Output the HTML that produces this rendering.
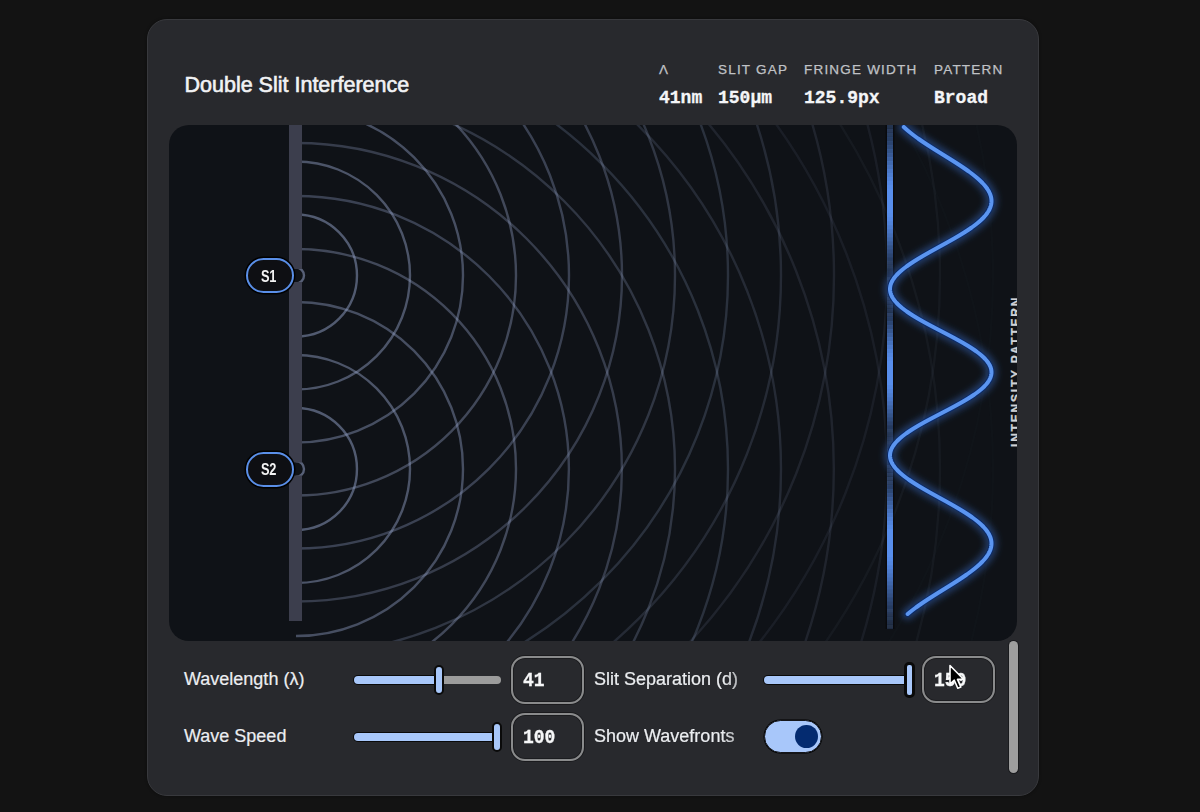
<!DOCTYPE html>
<html><head><meta charset="utf-8">
<style>
html,body{margin:0;padding:0;background:#131313;width:1200px;height:812px;overflow:hidden;font-family:"Liberation Sans",sans-serif;}
.abs{position:absolute;}
#card{position:absolute;left:147px;top:19px;width:890px;height:775px;background:#28292d;border:1px solid #38393d;border-radius:20px;box-shadow:0 0 3px rgba(0,0,0,0.4);}
.title{position:absolute;left:184.5px;top:71.8px;font-size:21.5px;color:#f1f2f4;white-space:nowrap;line-height:26px;-webkit-text-stroke:0.6px #f1f2f4;}
.lab{position:absolute;top:61.5px;font-size:13.5px;letter-spacing:1.2px;color:#c0c2c6;white-space:nowrap;line-height:16px;-webkit-text-stroke:0.25px #c0c2c6;}
.val{position:absolute;top:87px;font-family:"Liberation Mono",monospace;font-weight:bold;font-size:18px;color:#f4f5f7;white-space:nowrap;line-height:22px;-webkit-text-stroke:0.3px #f4f5f7;}
#canvas{position:absolute;left:169px;top:125px;width:848px;height:516px;background:#0f1217;border-radius:20px;overflow:hidden;}
#canvas svg{position:absolute;left:0;top:0;}
.pill{position:absolute;width:44px;height:31px;border:2px solid #5a8fe8;border-radius:18px;background:#0e0f13;box-shadow:0 0 0 1.5px #000;color:#f2f2f2;font-weight:bold;font-size:16px;letter-spacing:-0.3px;line-height:31px;text-align:center;}
.vtxt{position:absolute;left:840.5px;top:173px;width:12px;height:149px;}
.vtxt span{position:absolute;left:0;top:149px;transform-origin:0 0;transform:rotate(-90deg);font-size:12px;font-weight:bold;letter-spacing:1.8px;color:#d0d2d5;white-space:nowrap;line-height:12px;-webkit-text-stroke:0.3px #d0d2d5;}
.clab{position:absolute;font-size:18px;color:#eceef1;white-space:nowrap;line-height:22px;-webkit-text-stroke:0.2px #eceef1;}
.track{position:absolute;height:8px;border-radius:4px;}
.thumb{position:absolute;width:6px;height:26px;background:#a8c7fa;border:2px solid #0a0a0a;border-radius:5px;}
.box{position:absolute;width:69px;height:43.5px;border:2px solid #8a8b8c;border-radius:14px;box-shadow:0 0 0 1px rgba(0,0,0,0.35), inset 0 0 0 1px rgba(0,0,0,0.3);}
.bval{position:absolute;font-family:"Liberation Mono",monospace;font-weight:bold;font-size:20px;color:#f6f7f8;line-height:22px;transform-origin:0 0;transform:scaleX(0.9);-webkit-text-stroke:0.3px #f6f7f8;}
</style></head><body>
<div id="card"></div>
<div class="title">Double Slit Interference</div>
<div class="lab" style="left:659px">&#923;</div>
<div class="lab" style="left:718px">SLIT GAP</div>
<div class="lab" style="left:804px">FRINGE WIDTH</div>
<div class="lab" style="left:934px">PATTERN</div>
<div class="val" style="left:659px">41nm</div>
<div class="val" style="left:718px">150&#956;m</div>
<div class="val" style="left:804px">125.9px</div>
<div class="val" style="left:934px">Broad</div>

<div id="canvas">
<svg width="848" height="516" viewBox="0 0 848 516">
<defs><filter id="blur" x="-20%" y="-20%" width="140%" height="140%"><feGaussianBlur stdDeviation="3"/></filter></defs>
<path d="M127.0 142.5 A8.0 8.0 0 0 1 127.0 158.5" stroke="rgba(146,160,198,0.553)" stroke-width="2.4" fill="none"/>
<path d="M127.0 89.5 A61.0 61.0 0 0 1 127.0 211.5" stroke="rgba(146,160,198,0.510)" stroke-width="2.4" fill="none"/>
<path d="M127.0 36.5 A114.0 114.0 0 0 1 127.0 264.5" stroke="rgba(146,160,198,0.467)" stroke-width="2.4" fill="none"/>
<path d="M127.0 -16.5 A167.0 167.0 0 0 1 127.0 317.5" stroke="rgba(146,160,198,0.424)" stroke-width="2.4" fill="none"/>
<path d="M127.0 -69.5 A220.0 220.0 0 0 1 127.0 370.5" stroke="rgba(146,160,198,0.382)" stroke-width="2.4" fill="none"/>
<path d="M127.0 -122.5 A273.0 273.0 0 0 1 127.0 423.5" stroke="rgba(146,160,198,0.339)" stroke-width="2.4" fill="none"/>
<path d="M127.0 -175.5 A326.0 326.0 0 0 1 127.0 476.5" stroke="rgba(146,160,198,0.297)" stroke-width="2.4" fill="none"/>
<path d="M127.0 -228.5 A379.0 379.0 0 0 1 127.0 529.5" stroke="rgba(146,160,198,0.255)" stroke-width="2.4" fill="none"/>
<path d="M127.0 -281.5 A432.0 432.0 0 0 1 127.0 582.5" stroke="rgba(146,160,198,0.214)" stroke-width="2.4" fill="none"/>
<path d="M127.0 -334.5 A485.0 485.0 0 0 1 127.0 635.5" stroke="rgba(146,160,198,0.173)" stroke-width="2.4" fill="none"/>
<path d="M127.0 -387.5 A538.0 538.0 0 0 1 127.0 688.5" stroke="rgba(146,160,198,0.132)" stroke-width="2.4" fill="none"/>
<path d="M127.0 -440.5 A591.0 591.0 0 0 1 127.0 741.5" stroke="rgba(146,160,198,0.092)" stroke-width="2.4" fill="none"/>
<path d="M127.0 -493.5 A644.0 644.0 0 0 1 127.0 794.5" stroke="rgba(146,160,198,0.053)" stroke-width="2.4" fill="none"/>
<path d="M127.0 -546.5 A697.0 697.0 0 0 1 127.0 847.5" stroke="rgba(146,160,198,0.015)" stroke-width="2.4" fill="none"/>
<path d="M127.0 336.0 A8.0 8.0 0 0 1 127.0 352.0" stroke="rgba(146,160,198,0.553)" stroke-width="2.4" fill="none"/>
<path d="M127.0 283.0 A61.0 61.0 0 0 1 127.0 405.0" stroke="rgba(146,160,198,0.510)" stroke-width="2.4" fill="none"/>
<path d="M127.0 230.0 A114.0 114.0 0 0 1 127.0 458.0" stroke="rgba(146,160,198,0.467)" stroke-width="2.4" fill="none"/>
<path d="M127.0 177.0 A167.0 167.0 0 0 1 127.0 511.0" stroke="rgba(146,160,198,0.424)" stroke-width="2.4" fill="none"/>
<path d="M127.0 124.0 A220.0 220.0 0 0 1 127.0 564.0" stroke="rgba(146,160,198,0.382)" stroke-width="2.4" fill="none"/>
<path d="M127.0 71.0 A273.0 273.0 0 0 1 127.0 617.0" stroke="rgba(146,160,198,0.339)" stroke-width="2.4" fill="none"/>
<path d="M127.0 18.0 A326.0 326.0 0 0 1 127.0 670.0" stroke="rgba(146,160,198,0.297)" stroke-width="2.4" fill="none"/>
<path d="M127.0 -35.0 A379.0 379.0 0 0 1 127.0 723.0" stroke="rgba(146,160,198,0.255)" stroke-width="2.4" fill="none"/>
<path d="M127.0 -88.0 A432.0 432.0 0 0 1 127.0 776.0" stroke="rgba(146,160,198,0.214)" stroke-width="2.4" fill="none"/>
<path d="M127.0 -141.0 A485.0 485.0 0 0 1 127.0 829.0" stroke="rgba(146,160,198,0.173)" stroke-width="2.4" fill="none"/>
<path d="M127.0 -194.0 A538.0 538.0 0 0 1 127.0 882.0" stroke="rgba(146,160,198,0.132)" stroke-width="2.4" fill="none"/>
<path d="M127.0 -247.0 A591.0 591.0 0 0 1 127.0 935.0" stroke="rgba(146,160,198,0.092)" stroke-width="2.4" fill="none"/>
<path d="M127.0 -300.0 A644.0 644.0 0 0 1 127.0 988.0" stroke="rgba(146,160,198,0.053)" stroke-width="2.4" fill="none"/>
<path d="M127.0 -353.0 A697.0 697.0 0 0 1 127.0 1041.0" stroke="rgba(146,160,198,0.015)" stroke-width="2.4" fill="none"/>
<rect x="120" y="0.0" width="13" height="144.0" fill="#3c3e4d"/>
<rect x="120" y="157.0" width="13" height="180.5" fill="#3c3e4d"/>
<rect x="120" y="350.5" width="13" height="145.5" fill="#3c3e4d"/>
<rect x="716.5" y="0" width="9" height="504.0" fill="rgba(0,0,0,0.4)"/>
<rect x="718.0" y="0.0" width="6" height="3.5" fill="rgba(130,140,160,0.07)"/>
<rect x="718.0" y="0.0" width="6" height="4.1" fill="rgba(88,142,236,0.26)"/>
<rect x="718.0" y="4.0" width="6" height="3.5" fill="rgba(130,140,160,0.11)"/>
<rect x="718.0" y="4.0" width="6" height="4.1" fill="rgba(88,142,236,0.30)"/>
<rect x="718.0" y="8.0" width="6" height="3.5" fill="rgba(130,140,160,0.08)"/>
<rect x="718.0" y="8.0" width="6" height="4.1" fill="rgba(88,142,236,0.35)"/>
<rect x="718.0" y="12.0" width="6" height="4.1" fill="rgba(88,142,236,0.40)"/>
<rect x="718.0" y="16.0" width="6" height="4.1" fill="rgba(88,142,236,0.45)"/>
<rect x="718.0" y="20.0" width="6" height="4.1" fill="rgba(88,142,236,0.50)"/>
<rect x="718.0" y="24.0" width="6" height="4.1" fill="rgba(88,142,236,0.56)"/>
<rect x="718.0" y="28.0" width="6" height="4.1" fill="rgba(88,142,236,0.61)"/>
<rect x="718.0" y="32.0" width="6" height="4.1" fill="rgba(88,142,236,0.67)"/>
<rect x="718.0" y="36.0" width="6" height="4.1" fill="rgba(88,142,236,0.73)"/>
<rect x="718.0" y="40.0" width="6" height="4.1" fill="rgba(88,142,236,0.78)"/>
<rect x="718.0" y="44.0" width="6" height="4.1" fill="rgba(88,142,236,0.83)"/>
<rect x="718.0" y="48.0" width="6" height="4.1" fill="rgba(88,142,236,0.88)"/>
<rect x="718.0" y="52.0" width="6" height="4.1" fill="rgba(88,142,236,0.92)"/>
<rect x="718.0" y="56.0" width="6" height="4.1" fill="rgba(88,142,236,0.96)"/>
<rect x="718.0" y="60.0" width="6" height="4.1" fill="rgba(88,142,236,0.99)"/>
<rect x="718.0" y="64.0" width="6" height="4.1" fill="rgba(88,142,236,1.00)"/>
<rect x="718.0" y="68.0" width="6" height="4.1" fill="rgba(88,142,236,1.00)"/>
<rect x="718.0" y="72.0" width="6" height="4.1" fill="rgba(88,142,236,1.00)"/>
<rect x="718.0" y="76.0" width="6" height="4.1" fill="rgba(88,142,236,1.00)"/>
<rect x="718.0" y="80.0" width="6" height="4.1" fill="rgba(88,142,236,1.00)"/>
<rect x="718.0" y="84.0" width="6" height="4.1" fill="rgba(88,142,236,1.00)"/>
<rect x="718.0" y="88.0" width="6" height="4.1" fill="rgba(88,142,236,0.99)"/>
<rect x="718.0" y="92.0" width="6" height="4.1" fill="rgba(88,142,236,0.96)"/>
<rect x="718.0" y="96.0" width="6" height="4.1" fill="rgba(88,142,236,0.92)"/>
<rect x="718.0" y="100.0" width="6" height="4.1" fill="rgba(88,142,236,0.87)"/>
<rect x="718.0" y="104.0" width="6" height="4.1" fill="rgba(88,142,236,0.82)"/>
<rect x="718.0" y="108.0" width="6" height="4.1" fill="rgba(88,142,236,0.76)"/>
<rect x="718.0" y="112.0" width="6" height="4.1" fill="rgba(88,142,236,0.70)"/>
<rect x="718.0" y="116.0" width="6" height="4.1" fill="rgba(88,142,236,0.64)"/>
<rect x="718.0" y="120.0" width="6" height="4.1" fill="rgba(88,142,236,0.57)"/>
<rect x="718.0" y="124.0" width="6" height="4.1" fill="rgba(88,142,236,0.51)"/>
<rect x="718.0" y="128.0" width="6" height="4.1" fill="rgba(88,142,236,0.45)"/>
<rect x="718.0" y="132.0" width="6" height="4.1" fill="rgba(88,142,236,0.39)"/>
<rect x="718.0" y="136.0" width="6" height="3.5" fill="rgba(130,140,160,0.11)"/>
<rect x="718.0" y="136.0" width="6" height="4.1" fill="rgba(88,142,236,0.33)"/>
<rect x="718.0" y="140.0" width="6" height="3.5" fill="rgba(130,140,160,0.12)"/>
<rect x="718.0" y="140.0" width="6" height="4.1" fill="rgba(88,142,236,0.28)"/>
<rect x="718.0" y="144.0" width="6" height="3.5" fill="rgba(130,140,160,0.05)"/>
<rect x="718.0" y="144.0" width="6" height="4.1" fill="rgba(88,142,236,0.24)"/>
<rect x="718.0" y="148.0" width="6" height="3.5" fill="rgba(130,140,160,0.04)"/>
<rect x="718.0" y="148.0" width="6" height="4.1" fill="rgba(88,142,236,0.20)"/>
<rect x="718.0" y="152.0" width="6" height="3.5" fill="rgba(130,140,160,0.14)"/>
<rect x="718.0" y="152.0" width="6" height="4.1" fill="rgba(88,142,236,0.17)"/>
<rect x="718.0" y="156.0" width="6" height="3.5" fill="rgba(130,140,160,0.07)"/>
<rect x="718.0" y="156.0" width="6" height="4.1" fill="rgba(88,142,236,0.15)"/>
<rect x="718.0" y="160.0" width="6" height="3.5" fill="rgba(130,140,160,0.07)"/>
<rect x="718.0" y="160.0" width="6" height="4.1" fill="rgba(88,142,236,0.14)"/>
<rect x="718.0" y="164.0" width="6" height="3.5" fill="rgba(130,140,160,0.16)"/>
<rect x="718.0" y="164.0" width="6" height="4.1" fill="rgba(88,142,236,0.14)"/>
<rect x="718.0" y="168.0" width="6" height="3.5" fill="rgba(130,140,160,0.10)"/>
<rect x="718.0" y="168.0" width="6" height="4.1" fill="rgba(88,142,236,0.15)"/>
<rect x="718.0" y="172.0" width="6" height="3.5" fill="rgba(130,140,160,0.14)"/>
<rect x="718.0" y="172.0" width="6" height="4.1" fill="rgba(88,142,236,0.17)"/>
<rect x="718.0" y="176.0" width="6" height="3.5" fill="rgba(130,140,160,0.10)"/>
<rect x="718.0" y="176.0" width="6" height="4.1" fill="rgba(88,142,236,0.20)"/>
<rect x="718.0" y="180.0" width="6" height="3.5" fill="rgba(130,140,160,0.12)"/>
<rect x="718.0" y="180.0" width="6" height="4.1" fill="rgba(88,142,236,0.24)"/>
<rect x="718.0" y="184.0" width="6" height="3.5" fill="rgba(130,140,160,0.06)"/>
<rect x="718.0" y="184.0" width="6" height="4.1" fill="rgba(88,142,236,0.28)"/>
<rect x="718.0" y="188.0" width="6" height="3.5" fill="rgba(130,140,160,0.12)"/>
<rect x="718.0" y="188.0" width="6" height="4.1" fill="rgba(88,142,236,0.34)"/>
<rect x="718.0" y="192.0" width="6" height="4.1" fill="rgba(88,142,236,0.39)"/>
<rect x="718.0" y="196.0" width="6" height="4.1" fill="rgba(88,142,236,0.46)"/>
<rect x="718.0" y="200.0" width="6" height="4.1" fill="rgba(88,142,236,0.52)"/>
<rect x="718.0" y="204.0" width="6" height="4.1" fill="rgba(88,142,236,0.59)"/>
<rect x="718.0" y="208.0" width="6" height="4.1" fill="rgba(88,142,236,0.66)"/>
<rect x="718.0" y="212.0" width="6" height="4.1" fill="rgba(88,142,236,0.73)"/>
<rect x="718.0" y="216.0" width="6" height="4.1" fill="rgba(88,142,236,0.79)"/>
<rect x="718.0" y="220.0" width="6" height="4.1" fill="rgba(88,142,236,0.85)"/>
<rect x="718.0" y="224.0" width="6" height="4.1" fill="rgba(88,142,236,0.90)"/>
<rect x="718.0" y="228.0" width="6" height="4.1" fill="rgba(88,142,236,0.95)"/>
<rect x="718.0" y="232.0" width="6" height="4.1" fill="rgba(88,142,236,0.98)"/>
<rect x="718.0" y="236.0" width="6" height="4.1" fill="rgba(88,142,236,1.00)"/>
<rect x="718.0" y="240.0" width="6" height="4.1" fill="rgba(88,142,236,1.00)"/>
<rect x="718.0" y="244.0" width="6" height="4.1" fill="rgba(88,142,236,1.00)"/>
<rect x="718.0" y="248.0" width="6" height="4.1" fill="rgba(88,142,236,1.00)"/>
<rect x="718.0" y="252.0" width="6" height="4.1" fill="rgba(88,142,236,1.00)"/>
<rect x="718.0" y="256.0" width="6" height="4.1" fill="rgba(88,142,236,1.00)"/>
<rect x="718.0" y="260.0" width="6" height="4.1" fill="rgba(88,142,236,0.97)"/>
<rect x="718.0" y="264.0" width="6" height="4.1" fill="rgba(88,142,236,0.93)"/>
<rect x="718.0" y="268.0" width="6" height="4.1" fill="rgba(88,142,236,0.88)"/>
<rect x="718.0" y="272.0" width="6" height="4.1" fill="rgba(88,142,236,0.83)"/>
<rect x="718.0" y="276.0" width="6" height="4.1" fill="rgba(88,142,236,0.77)"/>
<rect x="718.0" y="280.0" width="6" height="4.1" fill="rgba(88,142,236,0.70)"/>
<rect x="718.0" y="284.0" width="6" height="4.1" fill="rgba(88,142,236,0.63)"/>
<rect x="718.0" y="288.0" width="6" height="4.1" fill="rgba(88,142,236,0.57)"/>
<rect x="718.0" y="292.0" width="6" height="4.1" fill="rgba(88,142,236,0.50)"/>
<rect x="718.0" y="296.0" width="6" height="4.1" fill="rgba(88,142,236,0.43)"/>
<rect x="718.0" y="300.0" width="6" height="4.1" fill="rgba(88,142,236,0.37)"/>
<rect x="718.0" y="304.0" width="6" height="3.5" fill="rgba(130,140,160,0.14)"/>
<rect x="718.0" y="304.0" width="6" height="4.1" fill="rgba(88,142,236,0.31)"/>
<rect x="718.0" y="308.0" width="6" height="3.5" fill="rgba(130,140,160,0.10)"/>
<rect x="718.0" y="308.0" width="6" height="4.1" fill="rgba(88,142,236,0.26)"/>
<rect x="718.0" y="312.0" width="6" height="3.5" fill="rgba(130,140,160,0.13)"/>
<rect x="718.0" y="312.0" width="6" height="4.1" fill="rgba(88,142,236,0.22)"/>
<rect x="718.0" y="316.0" width="6" height="3.5" fill="rgba(130,140,160,0.12)"/>
<rect x="718.0" y="316.0" width="6" height="4.1" fill="rgba(88,142,236,0.19)"/>
<rect x="718.0" y="320.0" width="6" height="3.5" fill="rgba(130,140,160,0.05)"/>
<rect x="718.0" y="320.0" width="6" height="4.1" fill="rgba(88,142,236,0.16)"/>
<rect x="718.0" y="324.0" width="6" height="3.5" fill="rgba(130,140,160,0.13)"/>
<rect x="718.0" y="324.0" width="6" height="4.1" fill="rgba(88,142,236,0.15)"/>
<rect x="718.0" y="328.0" width="6" height="3.5" fill="rgba(130,140,160,0.11)"/>
<rect x="718.0" y="328.0" width="6" height="4.1" fill="rgba(88,142,236,0.14)"/>
<rect x="718.0" y="332.0" width="6" height="3.5" fill="rgba(130,140,160,0.08)"/>
<rect x="718.0" y="332.0" width="6" height="4.1" fill="rgba(88,142,236,0.14)"/>
<rect x="718.0" y="336.0" width="6" height="3.5" fill="rgba(130,140,160,0.04)"/>
<rect x="718.0" y="336.0" width="6" height="4.1" fill="rgba(88,142,236,0.16)"/>
<rect x="718.0" y="340.0" width="6" height="3.5" fill="rgba(130,140,160,0.14)"/>
<rect x="718.0" y="340.0" width="6" height="4.1" fill="rgba(88,142,236,0.18)"/>
<rect x="718.0" y="344.0" width="6" height="3.5" fill="rgba(130,140,160,0.10)"/>
<rect x="718.0" y="344.0" width="6" height="4.1" fill="rgba(88,142,236,0.21)"/>
<rect x="718.0" y="348.0" width="6" height="3.5" fill="rgba(130,140,160,0.13)"/>
<rect x="718.0" y="348.0" width="6" height="4.1" fill="rgba(88,142,236,0.25)"/>
<rect x="718.0" y="352.0" width="6" height="3.5" fill="rgba(130,140,160,0.15)"/>
<rect x="718.0" y="352.0" width="6" height="4.1" fill="rgba(88,142,236,0.30)"/>
<rect x="718.0" y="356.0" width="6" height="3.5" fill="rgba(130,140,160,0.13)"/>
<rect x="718.0" y="356.0" width="6" height="4.1" fill="rgba(88,142,236,0.35)"/>
<rect x="718.0" y="360.0" width="6" height="4.1" fill="rgba(88,142,236,0.41)"/>
<rect x="718.0" y="364.0" width="6" height="4.1" fill="rgba(88,142,236,0.47)"/>
<rect x="718.0" y="368.0" width="6" height="4.1" fill="rgba(88,142,236,0.53)"/>
<rect x="718.0" y="372.0" width="6" height="4.1" fill="rgba(88,142,236,0.60)"/>
<rect x="718.0" y="376.0" width="6" height="4.1" fill="rgba(88,142,236,0.66)"/>
<rect x="718.0" y="380.0" width="6" height="4.1" fill="rgba(88,142,236,0.72)"/>
<rect x="718.0" y="384.0" width="6" height="4.1" fill="rgba(88,142,236,0.78)"/>
<rect x="718.0" y="388.0" width="6" height="4.1" fill="rgba(88,142,236,0.84)"/>
<rect x="718.0" y="392.0" width="6" height="4.1" fill="rgba(88,142,236,0.89)"/>
<rect x="718.0" y="396.0" width="6" height="4.1" fill="rgba(88,142,236,0.93)"/>
<rect x="718.0" y="400.0" width="6" height="4.1" fill="rgba(88,142,236,0.97)"/>
<rect x="718.0" y="404.0" width="6" height="4.1" fill="rgba(88,142,236,1.00)"/>
<rect x="718.0" y="408.0" width="6" height="4.1" fill="rgba(88,142,236,1.00)"/>
<rect x="718.0" y="412.0" width="6" height="4.1" fill="rgba(88,142,236,1.00)"/>
<rect x="718.0" y="416.0" width="6" height="4.1" fill="rgba(88,142,236,1.00)"/>
<rect x="718.0" y="420.0" width="6" height="4.1" fill="rgba(88,142,236,1.00)"/>
<rect x="718.0" y="424.0" width="6" height="4.1" fill="rgba(88,142,236,1.00)"/>
<rect x="718.0" y="428.0" width="6" height="4.1" fill="rgba(88,142,236,1.00)"/>
<rect x="718.0" y="432.0" width="6" height="4.1" fill="rgba(88,142,236,0.98)"/>
<rect x="718.0" y="436.0" width="6" height="4.1" fill="rgba(88,142,236,0.95)"/>
<rect x="718.0" y="440.0" width="6" height="4.1" fill="rgba(88,142,236,0.91)"/>
<rect x="718.0" y="444.0" width="6" height="4.1" fill="rgba(88,142,236,0.86)"/>
<rect x="718.0" y="448.0" width="6" height="4.1" fill="rgba(88,142,236,0.81)"/>
<rect x="718.0" y="452.0" width="6" height="4.1" fill="rgba(88,142,236,0.76)"/>
<rect x="718.0" y="456.0" width="6" height="4.1" fill="rgba(88,142,236,0.71)"/>
<rect x="718.0" y="460.0" width="6" height="4.1" fill="rgba(88,142,236,0.65)"/>
<rect x="718.0" y="464.0" width="6" height="4.1" fill="rgba(88,142,236,0.59)"/>
<rect x="718.0" y="468.0" width="6" height="4.1" fill="rgba(88,142,236,0.54)"/>
<rect x="718.0" y="472.0" width="6" height="4.1" fill="rgba(88,142,236,0.48)"/>
<rect x="718.0" y="476.0" width="6" height="4.1" fill="rgba(88,142,236,0.43)"/>
<rect x="718.0" y="480.0" width="6" height="4.1" fill="rgba(88,142,236,0.38)"/>
<rect x="718.0" y="484.0" width="6" height="3.5" fill="rgba(130,140,160,0.15)"/>
<rect x="718.0" y="484.0" width="6" height="4.1" fill="rgba(88,142,236,0.33)"/>
<rect x="718.0" y="488.0" width="6" height="3.5" fill="rgba(130,140,160,0.09)"/>
<rect x="718.0" y="488.0" width="6" height="4.1" fill="rgba(88,142,236,0.29)"/>
<rect x="718.0" y="492.0" width="6" height="3.5" fill="rgba(130,140,160,0.14)"/>
<rect x="718.0" y="492.0" width="6" height="4.1" fill="rgba(88,142,236,0.25)"/>
<rect x="718.0" y="496.0" width="6" height="3.5" fill="rgba(130,140,160,0.09)"/>
<rect x="718.0" y="496.0" width="6" height="4.1" fill="rgba(88,142,236,0.22)"/>
<rect x="718.0" y="500.0" width="6" height="3.5" fill="rgba(130,140,160,0.15)"/>
<rect x="718.0" y="500.0" width="6" height="4.1" fill="rgba(88,142,236,0.19)"/>
<polyline points="734.76,2.00 735.84,3.00 736.95,4.00 738.09,5.00 739.27,6.00 740.48,7.00 741.72,8.00 742.99,9.00 744.29,10.00 745.62,11.00 746.97,12.00 748.36,13.00 749.76,14.00 751.19,15.00 752.65,16.00 754.12,17.00 755.61,18.00 757.12,19.00 758.65,20.00 760.20,21.00 761.75,22.00 763.32,23.00 764.90,24.00 766.49,25.00 768.09,26.00 769.70,27.00 771.31,28.00 772.92,29.00 774.53,30.00 776.14,31.00 777.75,32.00 779.36,33.00 780.96,34.00 782.56,35.00 784.14,36.00 785.72,37.00 787.28,38.00 788.83,39.00 790.37,40.00 791.89,41.00 793.38,42.00 794.86,43.00 796.32,44.00 797.75,45.00 799.16,46.00 800.54,47.00 801.89,48.00 803.21,49.00 804.50,50.00 805.75,51.00 806.97,52.00 808.16,53.00 809.30,54.00 810.41,55.00 811.47,56.00 812.50,57.00 813.48,58.00 814.41,59.00 815.31,60.00 816.15,61.00 816.94,62.00 817.69,63.00 818.38,64.00 819.03,65.00 819.62,66.00 820.16,67.00 820.64,68.00 821.07,69.00 821.45,70.00 821.77,71.00 822.03,72.00 822.23,73.00 822.38,74.00 822.47,75.00 822.50,76.00 822.47,77.00 822.38,78.00 822.24,79.00 822.03,80.00 821.77,81.00 821.45,82.00 821.06,83.00 820.62,84.00 820.13,85.00 819.57,86.00 818.96,87.00 818.28,88.00 817.56,89.00 816.78,90.00 815.94,91.00 815.05,92.00 814.10,93.00 813.10,94.00 812.06,95.00 810.96,96.00 809.81,97.00 808.62,98.00 807.38,99.00 806.09,100.00 804.76,101.00 803.39,102.00 801.98,103.00 800.53,104.00 799.04,105.00 797.51,106.00 795.96,107.00 794.37,108.00 792.75,109.00 791.10,110.00 789.43,111.00 787.73,112.00 786.01,113.00 784.28,114.00 782.52,115.00 780.75,116.00 778.96,117.00 777.17,118.00 775.36,119.00 773.55,120.00 771.74,121.00 769.92,122.00 768.11,123.00 766.29,124.00 764.48,125.00 762.68,126.00 760.89,127.00 759.12,128.00 757.35,129.00 755.61,130.00 753.88,131.00 752.18,132.00 750.50,133.00 748.84,134.00 747.22,135.00 745.62,136.00 744.06,137.00 742.53,138.00 741.04,139.00 739.59,140.00 738.18,141.00 736.82,142.00 735.50,143.00 734.23,144.00 733.00,145.00 731.83,146.00 730.71,147.00 729.64,148.00 728.63,149.00 727.68,150.00 726.79,151.00 725.95,152.00 725.18,153.00 724.47,154.00 723.82,155.00 723.24,156.00 722.72,157.00 722.27,158.00 721.89,159.00 721.57,160.00 721.33,161.00 721.15,162.00 721.04,163.00 721.00,164.00 721.03,165.00 721.13,166.00 721.30,167.00 721.54,168.00 721.85,169.00 722.23,170.00 722.68,171.00 723.19,172.00 723.77,173.00 724.43,174.00 725.14,175.00 725.92,176.00 726.77,177.00 727.68,178.00 728.65,179.00 729.68,180.00 730.78,181.00 731.93,182.00 733.13,183.00 734.40,184.00 735.71,185.00 737.08,186.00 738.49,187.00 739.96,188.00 741.47,189.00 743.02,190.00 744.61,191.00 746.25,192.00 747.92,193.00 749.62,194.00 751.36,195.00 753.12,196.00 754.92,197.00 756.74,198.00 758.58,199.00 760.44,200.00 762.31,201.00 764.20,202.00 766.11,203.00 768.02,204.00 769.93,205.00 771.86,206.00 773.78,207.00 775.70,208.00 777.61,209.00 779.51,210.00 781.41,211.00 783.29,212.00 785.16,213.00 787.00,214.00 788.83,215.00 790.63,216.00 792.41,217.00 794.15,218.00 795.86,219.00 797.54,220.00 799.19,221.00 800.79,222.00 802.35,223.00 803.87,224.00 805.34,225.00 806.76,226.00 808.13,227.00 809.45,228.00 810.72,229.00 811.93,230.00 813.08,231.00 814.17,232.00 815.20,233.00 816.17,234.00 817.07,235.00 817.91,236.00 818.68,237.00 819.38,238.00 820.01,239.00 820.57,240.00 821.07,241.00 821.49,242.00 821.84,243.00 822.11,244.00 822.31,245.00 822.44,246.00 822.50,247.00 822.48,248.00 822.39,249.00 822.22,250.00 821.98,251.00 821.67,252.00 821.29,253.00 820.83,254.00 820.30,255.00 819.70,256.00 819.04,257.00 818.30,258.00 817.50,259.00 816.63,260.00 815.69,261.00 814.69,262.00 813.63,263.00 812.51,264.00 811.33,265.00 810.09,266.00 808.80,267.00 807.45,268.00 806.06,269.00 804.61,270.00 803.11,271.00 801.57,272.00 799.99,273.00 798.37,274.00 796.71,275.00 795.01,276.00 793.28,277.00 791.52,278.00 789.73,279.00 787.92,280.00 786.08,281.00 784.23,282.00 782.35,283.00 780.46,284.00 778.56,285.00 776.65,286.00 774.74,287.00 772.82,288.00 770.89,289.00 768.98,290.00 767.06,291.00 765.15,292.00 763.26,293.00 761.37,294.00 759.50,295.00 757.65,296.00 755.82,297.00 754.02,298.00 752.24,299.00 750.48,300.00 748.76,301.00 747.08,302.00 745.42,303.00 743.81,304.00 742.24,305.00 740.71,306.00 739.22,307.00 737.78,308.00 736.39,309.00 735.05,310.00 733.76,311.00 732.52,312.00 731.35,313.00 730.22,314.00 729.16,315.00 728.16,316.00 727.22,317.00 726.34,318.00 725.52,319.00 724.78,320.00 724.09,321.00 723.47,322.00 722.92,323.00 722.44,324.00 722.03,325.00 721.69,326.00 721.41,327.00 721.21,328.00 721.07,329.00 721.01,330.00 721.01,331.00 721.09,332.00 721.23,333.00 721.44,334.00 721.72,335.00 722.07,336.00 722.49,337.00 722.97,338.00 723.52,339.00 724.14,340.00 724.82,341.00 725.56,342.00 726.36,343.00 727.23,344.00 728.15,345.00 729.13,346.00 730.17,347.00 731.26,348.00 732.41,349.00 733.61,350.00 734.86,351.00 736.15,352.00 737.50,353.00 738.88,354.00 740.31,355.00 741.78,356.00 743.29,357.00 744.84,358.00 746.41,359.00 748.02,360.00 749.66,361.00 751.33,362.00 753.03,363.00 754.74,364.00 756.48,365.00 758.23,366.00 760.00,367.00 761.79,368.00 763.58,369.00 765.39,370.00 767.20,371.00 769.01,372.00 770.83,373.00 772.65,374.00 774.46,375.00 776.27,376.00 778.07,377.00 779.86,378.00 781.64,379.00 783.40,380.00 785.15,381.00 786.88,382.00 788.58,383.00 790.27,384.00 791.93,385.00 793.56,386.00 795.17,387.00 796.74,388.00 798.28,389.00 799.79,390.00 801.26,391.00 802.69,392.00 804.08,393.00 805.43,394.00 806.74,395.00 808.00,396.00 809.22,397.00 810.39,398.00 811.51,399.00 812.59,400.00 813.61,401.00 814.58,402.00 815.50,403.00 816.36,404.00 817.17,405.00 817.93,406.00 818.63,407.00 819.27,408.00 819.85,409.00 820.38,410.00 820.85,411.00 821.26,412.00 821.62,413.00 821.91,414.00 822.14,415.00 822.32,416.00 822.44,417.00 822.49,418.00 822.49,419.00 822.43,420.00 822.31,421.00 822.14,422.00 821.91,423.00 821.62,424.00 821.27,425.00 820.87,426.00 820.41,427.00 819.90,428.00 819.33,429.00 818.71,430.00 818.04,431.00 817.32,432.00 816.55,433.00 815.73,434.00 814.87,435.00 813.95,436.00 812.99,437.00 811.99,438.00 810.95,439.00 809.86,440.00 808.73,441.00 807.57,442.00 806.37,443.00 805.13,444.00 803.86,445.00 802.55,446.00 801.22,447.00 799.85,448.00 798.46,449.00 797.04,450.00 795.59,451.00 794.13,452.00 792.64,453.00 791.13,454.00 789.60,455.00 788.06,456.00 786.50,457.00 784.93,458.00 783.35,459.00 781.76,460.00 780.16,461.00 778.56,462.00 776.95,463.00 775.34,464.00 773.72,465.00 772.11,466.00 770.50,467.00 768.89,468.00 767.29,469.00 765.70,470.00 764.11,471.00 762.54,472.00 760.97,473.00 759.42,474.00 757.89,475.00 756.37,476.00 754.86,477.00 753.38,478.00 751.92,479.00 750.48,480.00 749.06,481.00 747.66,482.00 746.29,483.00 744.95,484.00 743.63,485.00 742.35,486.00 741.09,487.00 739.87,488.00 738.67,489.00" fill="none" stroke="rgba(66,133,244,0.35)" stroke-width="12" stroke-linecap="round" stroke-linejoin="round" filter="url(#blur)"/>
<polyline points="734.76,2.00 735.84,3.00 736.95,4.00 738.09,5.00 739.27,6.00 740.48,7.00 741.72,8.00 742.99,9.00 744.29,10.00 745.62,11.00 746.97,12.00 748.36,13.00 749.76,14.00 751.19,15.00 752.65,16.00 754.12,17.00 755.61,18.00 757.12,19.00 758.65,20.00 760.20,21.00 761.75,22.00 763.32,23.00 764.90,24.00 766.49,25.00 768.09,26.00 769.70,27.00 771.31,28.00 772.92,29.00 774.53,30.00 776.14,31.00 777.75,32.00 779.36,33.00 780.96,34.00 782.56,35.00 784.14,36.00 785.72,37.00 787.28,38.00 788.83,39.00 790.37,40.00 791.89,41.00 793.38,42.00 794.86,43.00 796.32,44.00 797.75,45.00 799.16,46.00 800.54,47.00 801.89,48.00 803.21,49.00 804.50,50.00 805.75,51.00 806.97,52.00 808.16,53.00 809.30,54.00 810.41,55.00 811.47,56.00 812.50,57.00 813.48,58.00 814.41,59.00 815.31,60.00 816.15,61.00 816.94,62.00 817.69,63.00 818.38,64.00 819.03,65.00 819.62,66.00 820.16,67.00 820.64,68.00 821.07,69.00 821.45,70.00 821.77,71.00 822.03,72.00 822.23,73.00 822.38,74.00 822.47,75.00 822.50,76.00 822.47,77.00 822.38,78.00 822.24,79.00 822.03,80.00 821.77,81.00 821.45,82.00 821.06,83.00 820.62,84.00 820.13,85.00 819.57,86.00 818.96,87.00 818.28,88.00 817.56,89.00 816.78,90.00 815.94,91.00 815.05,92.00 814.10,93.00 813.10,94.00 812.06,95.00 810.96,96.00 809.81,97.00 808.62,98.00 807.38,99.00 806.09,100.00 804.76,101.00 803.39,102.00 801.98,103.00 800.53,104.00 799.04,105.00 797.51,106.00 795.96,107.00 794.37,108.00 792.75,109.00 791.10,110.00 789.43,111.00 787.73,112.00 786.01,113.00 784.28,114.00 782.52,115.00 780.75,116.00 778.96,117.00 777.17,118.00 775.36,119.00 773.55,120.00 771.74,121.00 769.92,122.00 768.11,123.00 766.29,124.00 764.48,125.00 762.68,126.00 760.89,127.00 759.12,128.00 757.35,129.00 755.61,130.00 753.88,131.00 752.18,132.00 750.50,133.00 748.84,134.00 747.22,135.00 745.62,136.00 744.06,137.00 742.53,138.00 741.04,139.00 739.59,140.00 738.18,141.00 736.82,142.00 735.50,143.00 734.23,144.00 733.00,145.00 731.83,146.00 730.71,147.00 729.64,148.00 728.63,149.00 727.68,150.00 726.79,151.00 725.95,152.00 725.18,153.00 724.47,154.00 723.82,155.00 723.24,156.00 722.72,157.00 722.27,158.00 721.89,159.00 721.57,160.00 721.33,161.00 721.15,162.00 721.04,163.00 721.00,164.00 721.03,165.00 721.13,166.00 721.30,167.00 721.54,168.00 721.85,169.00 722.23,170.00 722.68,171.00 723.19,172.00 723.77,173.00 724.43,174.00 725.14,175.00 725.92,176.00 726.77,177.00 727.68,178.00 728.65,179.00 729.68,180.00 730.78,181.00 731.93,182.00 733.13,183.00 734.40,184.00 735.71,185.00 737.08,186.00 738.49,187.00 739.96,188.00 741.47,189.00 743.02,190.00 744.61,191.00 746.25,192.00 747.92,193.00 749.62,194.00 751.36,195.00 753.12,196.00 754.92,197.00 756.74,198.00 758.58,199.00 760.44,200.00 762.31,201.00 764.20,202.00 766.11,203.00 768.02,204.00 769.93,205.00 771.86,206.00 773.78,207.00 775.70,208.00 777.61,209.00 779.51,210.00 781.41,211.00 783.29,212.00 785.16,213.00 787.00,214.00 788.83,215.00 790.63,216.00 792.41,217.00 794.15,218.00 795.86,219.00 797.54,220.00 799.19,221.00 800.79,222.00 802.35,223.00 803.87,224.00 805.34,225.00 806.76,226.00 808.13,227.00 809.45,228.00 810.72,229.00 811.93,230.00 813.08,231.00 814.17,232.00 815.20,233.00 816.17,234.00 817.07,235.00 817.91,236.00 818.68,237.00 819.38,238.00 820.01,239.00 820.57,240.00 821.07,241.00 821.49,242.00 821.84,243.00 822.11,244.00 822.31,245.00 822.44,246.00 822.50,247.00 822.48,248.00 822.39,249.00 822.22,250.00 821.98,251.00 821.67,252.00 821.29,253.00 820.83,254.00 820.30,255.00 819.70,256.00 819.04,257.00 818.30,258.00 817.50,259.00 816.63,260.00 815.69,261.00 814.69,262.00 813.63,263.00 812.51,264.00 811.33,265.00 810.09,266.00 808.80,267.00 807.45,268.00 806.06,269.00 804.61,270.00 803.11,271.00 801.57,272.00 799.99,273.00 798.37,274.00 796.71,275.00 795.01,276.00 793.28,277.00 791.52,278.00 789.73,279.00 787.92,280.00 786.08,281.00 784.23,282.00 782.35,283.00 780.46,284.00 778.56,285.00 776.65,286.00 774.74,287.00 772.82,288.00 770.89,289.00 768.98,290.00 767.06,291.00 765.15,292.00 763.26,293.00 761.37,294.00 759.50,295.00 757.65,296.00 755.82,297.00 754.02,298.00 752.24,299.00 750.48,300.00 748.76,301.00 747.08,302.00 745.42,303.00 743.81,304.00 742.24,305.00 740.71,306.00 739.22,307.00 737.78,308.00 736.39,309.00 735.05,310.00 733.76,311.00 732.52,312.00 731.35,313.00 730.22,314.00 729.16,315.00 728.16,316.00 727.22,317.00 726.34,318.00 725.52,319.00 724.78,320.00 724.09,321.00 723.47,322.00 722.92,323.00 722.44,324.00 722.03,325.00 721.69,326.00 721.41,327.00 721.21,328.00 721.07,329.00 721.01,330.00 721.01,331.00 721.09,332.00 721.23,333.00 721.44,334.00 721.72,335.00 722.07,336.00 722.49,337.00 722.97,338.00 723.52,339.00 724.14,340.00 724.82,341.00 725.56,342.00 726.36,343.00 727.23,344.00 728.15,345.00 729.13,346.00 730.17,347.00 731.26,348.00 732.41,349.00 733.61,350.00 734.86,351.00 736.15,352.00 737.50,353.00 738.88,354.00 740.31,355.00 741.78,356.00 743.29,357.00 744.84,358.00 746.41,359.00 748.02,360.00 749.66,361.00 751.33,362.00 753.03,363.00 754.74,364.00 756.48,365.00 758.23,366.00 760.00,367.00 761.79,368.00 763.58,369.00 765.39,370.00 767.20,371.00 769.01,372.00 770.83,373.00 772.65,374.00 774.46,375.00 776.27,376.00 778.07,377.00 779.86,378.00 781.64,379.00 783.40,380.00 785.15,381.00 786.88,382.00 788.58,383.00 790.27,384.00 791.93,385.00 793.56,386.00 795.17,387.00 796.74,388.00 798.28,389.00 799.79,390.00 801.26,391.00 802.69,392.00 804.08,393.00 805.43,394.00 806.74,395.00 808.00,396.00 809.22,397.00 810.39,398.00 811.51,399.00 812.59,400.00 813.61,401.00 814.58,402.00 815.50,403.00 816.36,404.00 817.17,405.00 817.93,406.00 818.63,407.00 819.27,408.00 819.85,409.00 820.38,410.00 820.85,411.00 821.26,412.00 821.62,413.00 821.91,414.00 822.14,415.00 822.32,416.00 822.44,417.00 822.49,418.00 822.49,419.00 822.43,420.00 822.31,421.00 822.14,422.00 821.91,423.00 821.62,424.00 821.27,425.00 820.87,426.00 820.41,427.00 819.90,428.00 819.33,429.00 818.71,430.00 818.04,431.00 817.32,432.00 816.55,433.00 815.73,434.00 814.87,435.00 813.95,436.00 812.99,437.00 811.99,438.00 810.95,439.00 809.86,440.00 808.73,441.00 807.57,442.00 806.37,443.00 805.13,444.00 803.86,445.00 802.55,446.00 801.22,447.00 799.85,448.00 798.46,449.00 797.04,450.00 795.59,451.00 794.13,452.00 792.64,453.00 791.13,454.00 789.60,455.00 788.06,456.00 786.50,457.00 784.93,458.00 783.35,459.00 781.76,460.00 780.16,461.00 778.56,462.00 776.95,463.00 775.34,464.00 773.72,465.00 772.11,466.00 770.50,467.00 768.89,468.00 767.29,469.00 765.70,470.00 764.11,471.00 762.54,472.00 760.97,473.00 759.42,474.00 757.89,475.00 756.37,476.00 754.86,477.00 753.38,478.00 751.92,479.00 750.48,480.00 749.06,481.00 747.66,482.00 746.29,483.00 744.95,484.00 743.63,485.00 742.35,486.00 741.09,487.00 739.87,488.00 738.67,489.00" fill="none" stroke="#0b2a66" stroke-width="6" stroke-linecap="round" stroke-linejoin="round"/>
<polyline points="734.76,2.00 735.84,3.00 736.95,4.00 738.09,5.00 739.27,6.00 740.48,7.00 741.72,8.00 742.99,9.00 744.29,10.00 745.62,11.00 746.97,12.00 748.36,13.00 749.76,14.00 751.19,15.00 752.65,16.00 754.12,17.00 755.61,18.00 757.12,19.00 758.65,20.00 760.20,21.00 761.75,22.00 763.32,23.00 764.90,24.00 766.49,25.00 768.09,26.00 769.70,27.00 771.31,28.00 772.92,29.00 774.53,30.00 776.14,31.00 777.75,32.00 779.36,33.00 780.96,34.00 782.56,35.00 784.14,36.00 785.72,37.00 787.28,38.00 788.83,39.00 790.37,40.00 791.89,41.00 793.38,42.00 794.86,43.00 796.32,44.00 797.75,45.00 799.16,46.00 800.54,47.00 801.89,48.00 803.21,49.00 804.50,50.00 805.75,51.00 806.97,52.00 808.16,53.00 809.30,54.00 810.41,55.00 811.47,56.00 812.50,57.00 813.48,58.00 814.41,59.00 815.31,60.00 816.15,61.00 816.94,62.00 817.69,63.00 818.38,64.00 819.03,65.00 819.62,66.00 820.16,67.00 820.64,68.00 821.07,69.00 821.45,70.00 821.77,71.00 822.03,72.00 822.23,73.00 822.38,74.00 822.47,75.00 822.50,76.00 822.47,77.00 822.38,78.00 822.24,79.00 822.03,80.00 821.77,81.00 821.45,82.00 821.06,83.00 820.62,84.00 820.13,85.00 819.57,86.00 818.96,87.00 818.28,88.00 817.56,89.00 816.78,90.00 815.94,91.00 815.05,92.00 814.10,93.00 813.10,94.00 812.06,95.00 810.96,96.00 809.81,97.00 808.62,98.00 807.38,99.00 806.09,100.00 804.76,101.00 803.39,102.00 801.98,103.00 800.53,104.00 799.04,105.00 797.51,106.00 795.96,107.00 794.37,108.00 792.75,109.00 791.10,110.00 789.43,111.00 787.73,112.00 786.01,113.00 784.28,114.00 782.52,115.00 780.75,116.00 778.96,117.00 777.17,118.00 775.36,119.00 773.55,120.00 771.74,121.00 769.92,122.00 768.11,123.00 766.29,124.00 764.48,125.00 762.68,126.00 760.89,127.00 759.12,128.00 757.35,129.00 755.61,130.00 753.88,131.00 752.18,132.00 750.50,133.00 748.84,134.00 747.22,135.00 745.62,136.00 744.06,137.00 742.53,138.00 741.04,139.00 739.59,140.00 738.18,141.00 736.82,142.00 735.50,143.00 734.23,144.00 733.00,145.00 731.83,146.00 730.71,147.00 729.64,148.00 728.63,149.00 727.68,150.00 726.79,151.00 725.95,152.00 725.18,153.00 724.47,154.00 723.82,155.00 723.24,156.00 722.72,157.00 722.27,158.00 721.89,159.00 721.57,160.00 721.33,161.00 721.15,162.00 721.04,163.00 721.00,164.00 721.03,165.00 721.13,166.00 721.30,167.00 721.54,168.00 721.85,169.00 722.23,170.00 722.68,171.00 723.19,172.00 723.77,173.00 724.43,174.00 725.14,175.00 725.92,176.00 726.77,177.00 727.68,178.00 728.65,179.00 729.68,180.00 730.78,181.00 731.93,182.00 733.13,183.00 734.40,184.00 735.71,185.00 737.08,186.00 738.49,187.00 739.96,188.00 741.47,189.00 743.02,190.00 744.61,191.00 746.25,192.00 747.92,193.00 749.62,194.00 751.36,195.00 753.12,196.00 754.92,197.00 756.74,198.00 758.58,199.00 760.44,200.00 762.31,201.00 764.20,202.00 766.11,203.00 768.02,204.00 769.93,205.00 771.86,206.00 773.78,207.00 775.70,208.00 777.61,209.00 779.51,210.00 781.41,211.00 783.29,212.00 785.16,213.00 787.00,214.00 788.83,215.00 790.63,216.00 792.41,217.00 794.15,218.00 795.86,219.00 797.54,220.00 799.19,221.00 800.79,222.00 802.35,223.00 803.87,224.00 805.34,225.00 806.76,226.00 808.13,227.00 809.45,228.00 810.72,229.00 811.93,230.00 813.08,231.00 814.17,232.00 815.20,233.00 816.17,234.00 817.07,235.00 817.91,236.00 818.68,237.00 819.38,238.00 820.01,239.00 820.57,240.00 821.07,241.00 821.49,242.00 821.84,243.00 822.11,244.00 822.31,245.00 822.44,246.00 822.50,247.00 822.48,248.00 822.39,249.00 822.22,250.00 821.98,251.00 821.67,252.00 821.29,253.00 820.83,254.00 820.30,255.00 819.70,256.00 819.04,257.00 818.30,258.00 817.50,259.00 816.63,260.00 815.69,261.00 814.69,262.00 813.63,263.00 812.51,264.00 811.33,265.00 810.09,266.00 808.80,267.00 807.45,268.00 806.06,269.00 804.61,270.00 803.11,271.00 801.57,272.00 799.99,273.00 798.37,274.00 796.71,275.00 795.01,276.00 793.28,277.00 791.52,278.00 789.73,279.00 787.92,280.00 786.08,281.00 784.23,282.00 782.35,283.00 780.46,284.00 778.56,285.00 776.65,286.00 774.74,287.00 772.82,288.00 770.89,289.00 768.98,290.00 767.06,291.00 765.15,292.00 763.26,293.00 761.37,294.00 759.50,295.00 757.65,296.00 755.82,297.00 754.02,298.00 752.24,299.00 750.48,300.00 748.76,301.00 747.08,302.00 745.42,303.00 743.81,304.00 742.24,305.00 740.71,306.00 739.22,307.00 737.78,308.00 736.39,309.00 735.05,310.00 733.76,311.00 732.52,312.00 731.35,313.00 730.22,314.00 729.16,315.00 728.16,316.00 727.22,317.00 726.34,318.00 725.52,319.00 724.78,320.00 724.09,321.00 723.47,322.00 722.92,323.00 722.44,324.00 722.03,325.00 721.69,326.00 721.41,327.00 721.21,328.00 721.07,329.00 721.01,330.00 721.01,331.00 721.09,332.00 721.23,333.00 721.44,334.00 721.72,335.00 722.07,336.00 722.49,337.00 722.97,338.00 723.52,339.00 724.14,340.00 724.82,341.00 725.56,342.00 726.36,343.00 727.23,344.00 728.15,345.00 729.13,346.00 730.17,347.00 731.26,348.00 732.41,349.00 733.61,350.00 734.86,351.00 736.15,352.00 737.50,353.00 738.88,354.00 740.31,355.00 741.78,356.00 743.29,357.00 744.84,358.00 746.41,359.00 748.02,360.00 749.66,361.00 751.33,362.00 753.03,363.00 754.74,364.00 756.48,365.00 758.23,366.00 760.00,367.00 761.79,368.00 763.58,369.00 765.39,370.00 767.20,371.00 769.01,372.00 770.83,373.00 772.65,374.00 774.46,375.00 776.27,376.00 778.07,377.00 779.86,378.00 781.64,379.00 783.40,380.00 785.15,381.00 786.88,382.00 788.58,383.00 790.27,384.00 791.93,385.00 793.56,386.00 795.17,387.00 796.74,388.00 798.28,389.00 799.79,390.00 801.26,391.00 802.69,392.00 804.08,393.00 805.43,394.00 806.74,395.00 808.00,396.00 809.22,397.00 810.39,398.00 811.51,399.00 812.59,400.00 813.61,401.00 814.58,402.00 815.50,403.00 816.36,404.00 817.17,405.00 817.93,406.00 818.63,407.00 819.27,408.00 819.85,409.00 820.38,410.00 820.85,411.00 821.26,412.00 821.62,413.00 821.91,414.00 822.14,415.00 822.32,416.00 822.44,417.00 822.49,418.00 822.49,419.00 822.43,420.00 822.31,421.00 822.14,422.00 821.91,423.00 821.62,424.00 821.27,425.00 820.87,426.00 820.41,427.00 819.90,428.00 819.33,429.00 818.71,430.00 818.04,431.00 817.32,432.00 816.55,433.00 815.73,434.00 814.87,435.00 813.95,436.00 812.99,437.00 811.99,438.00 810.95,439.00 809.86,440.00 808.73,441.00 807.57,442.00 806.37,443.00 805.13,444.00 803.86,445.00 802.55,446.00 801.22,447.00 799.85,448.00 798.46,449.00 797.04,450.00 795.59,451.00 794.13,452.00 792.64,453.00 791.13,454.00 789.60,455.00 788.06,456.00 786.50,457.00 784.93,458.00 783.35,459.00 781.76,460.00 780.16,461.00 778.56,462.00 776.95,463.00 775.34,464.00 773.72,465.00 772.11,466.00 770.50,467.00 768.89,468.00 767.29,469.00 765.70,470.00 764.11,471.00 762.54,472.00 760.97,473.00 759.42,474.00 757.89,475.00 756.37,476.00 754.86,477.00 753.38,478.00 751.92,479.00 750.48,480.00 749.06,481.00 747.66,482.00 746.29,483.00 744.95,484.00 743.63,485.00 742.35,486.00 741.09,487.00 739.87,488.00 738.67,489.00" fill="none" stroke="#5b95f0" stroke-width="4" stroke-linecap="round" stroke-linejoin="round"/>
</svg>
<div class="pill" style="left:77px;top:133px"><span style="display:inline-block;transform:scaleX(0.8);position:relative;left:-1.5px;top:0.5px">S1</span></div>
<div class="pill" style="left:77px;top:326.5px"><span style="display:inline-block;transform:scaleX(0.8);position:relative;left:-1.5px">S2</span></div>
<div class="vtxt"><span>INTENSITY PATTERN</span></div>
</div>

<div class="clab" style="left:184px;top:668px">Wavelength (&#955;)</div>
<div class="clab" style="left:184px;top:725px">Wave Speed</div>
<div class="clab" style="left:594px;top:668px;width:144px;-webkit-mask-image:linear-gradient(90deg,#000 90%,rgba(0,0,0,0.72) 100%)">Slit Separation (d)</div>
<div class="clab" style="left:594px;top:725px;width:142px;-webkit-mask-image:linear-gradient(90deg,#000 90%,rgba(0,0,0,0.72) 100%)">Show Wavefronts</div>

<div class="track" style="left:354px;top:676px;width:147px;background:#9c9c9c"></div>
<div class="track" style="left:354px;top:676px;width:85px;background:#a8c7fa;box-shadow:0 0 0 1px #0a0a0a"></div>
<div class="thumb" style="left:434px;top:665px"></div>
<div class="box" style="left:511px;top:656px"></div>
<div class="bval" style="left:522.5px;top:669.5px">41</div>

<div class="track" style="left:354px;top:733px;width:143px;background:#a8c7fa;box-shadow:0 0 0 1px #0a0a0a"></div>
<div class="thumb" style="left:492px;top:721.5px"></div>
<div class="box" style="left:511px;top:713px"></div>
<div class="bval" style="left:522.5px;top:726.5px">100</div>

<div class="track" style="left:764px;top:675.5px;width:145px;background:#a8c7fa;box-shadow:0 0 0 1px #0a0a0a"></div>
<div class="thumb" style="left:903.5px;top:661.5px;border-width:3px;width:5px;height:30px"></div>
<div class="box" style="left:921.5px;top:655.5px"></div>
<div class="bval" style="left:934px;top:669.5px">150</div>

<div class="abs" style="left:764px;top:720px;width:56px;height:31px;border-radius:17px;background:#a8c7fa;border:1px solid #15161a;box-shadow:0 0 0 0.5px #000"></div>
<div class="abs" style="left:795px;top:725px;width:22.5px;height:23px;border-radius:50%;background:#042b70"></div>

<div class="abs" style="left:1009px;top:641px;width:9px;height:132px;border-radius:5px;background:#9e9e9e;box-shadow:0 0 0 1px #1a1b1e"></div>

<svg class="abs" style="left:947px;top:663px" width="20" height="28" viewBox="0 0 20 28">
<path d="M3 2.5 L3 21 L7.3 17.2 L10.8 25.2 L13.8 24 L10.5 16.4 L16.5 16.2 Z" fill="#000" stroke="#fff" stroke-width="1.6" stroke-linejoin="round"/>
</svg>
</body></html>
